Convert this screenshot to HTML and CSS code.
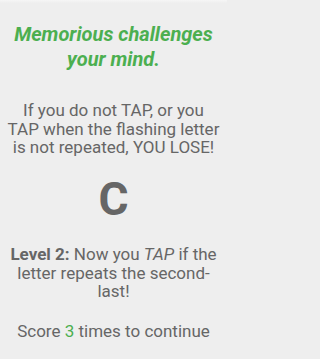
FILE: index.html
```html
<!DOCTYPE html>
<html>
<head>
<meta charset="utf-8">
<link rel="stylesheet" href="styles.css">
</head>
<body>
<main class="screen">
  <h1 class="title">Memorious challenges your mind.</h1>
  <p class="rules">If you do not TAP, or you<br>TAP when the flashing letter<br>is not repeated, YOU LOSE!</p>
  <div class="letter">C</div>
  <p class="level"><b>Level 2:</b> Now you <i>TAP</i> if the letter repeats the second-last!</p>
  <p class="score">Score <span class="accent">3</span> times to continue</p>
</main>
</body>
</html>
```
FILE: styles.css
```css
html, body {
  margin: 0;
  padding: 0;
  background: #eeeeee;
}
.screen {
  width: 227px;
  height: 359px;
  box-sizing: border-box;
  padding: 22px 4px 0;
  display: flex;
  flex-direction: column;
  align-items: stretch;
  text-align: center;
  font-family: Roboto, "Noto Sans", sans-serif;
  color: #666666;
  background: linear-gradient(#f6f6f6, #eeeeee 3px);
}
.title {
  margin: 0;
  font-size: 20px;
  line-height: 25px;
  font-weight: 700;
  font-style: italic;
  color: #4caf50;
}
.rules, .level, .score {
  margin: 0;
  font-size: 17px;
  line-height: 18.5px;
}
.rules {
  margin: 29px -4px 0;
  white-space: nowrap;
}
.letter {
  margin-top: 19.2px;
  font-size: 46px;
  line-height: 46px;
  font-weight: 700;
}
.level { margin-top: 23.7px; }
.level b { font-weight: 700; }
.score { margin-top: 20.7px; }
.accent { color: #4caf50; }
```
